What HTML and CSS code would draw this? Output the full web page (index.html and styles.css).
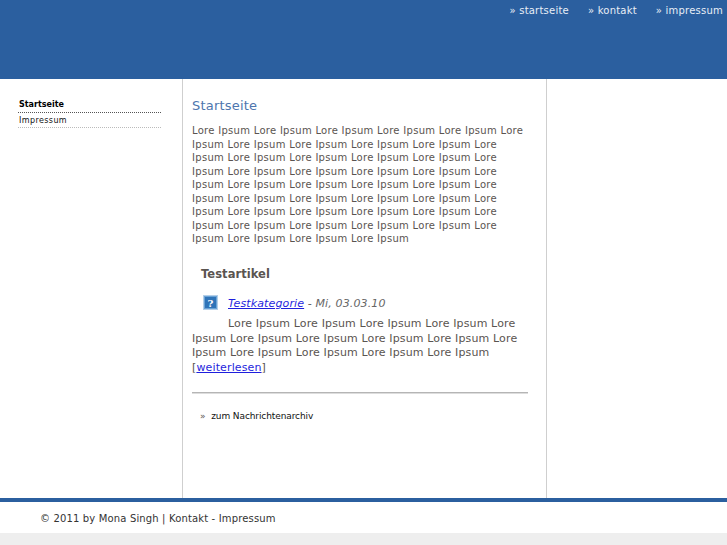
FILE: index.html
```html
<!DOCTYPE html>
<html lang="de">
<head>
<meta charset="utf-8">
<title>Startseite</title>
<link rel="stylesheet" href="styles.css">
</head>
<body>
<header class="top">
  <nav class="topnav">
    <a href="#">» startseite</a>
    <a href="#">» kontakt</a>
    <a href="#">» impressum</a>
  </nav>
</header>
<div class="wrap">
  <aside class="side">
    <a class="sidelink current" href="#">Startseite</a>
    <a class="sidelink" href="#">Impressum</a>
  </aside>
  <main class="main">
    <h1 class="title">Startseite</h1>
    <p class="intro">Lore Ipsum Lore Ipsum Lore Ipsum Lore Ipsum Lore Ipsum Lore Ipsum Lore Ipsum Lore Ipsum Lore Ipsum Lore Ipsum Lore Ipsum Lore Ipsum Lore Ipsum Lore Ipsum Lore Ipsum Lore Ipsum Lore Ipsum Lore Ipsum Lore Ipsum Lore Ipsum Lore Ipsum Lore Ipsum Lore Ipsum Lore Ipsum Lore Ipsum Lore Ipsum Lore Ipsum Lore Ipsum Lore Ipsum Lore Ipsum Lore Ipsum Lore Ipsum Lore Ipsum Lore Ipsum Lore Ipsum Lore Ipsum Lore Ipsum Lore Ipsum Lore Ipsum Lore Ipsum Lore Ipsum Lore Ipsum Lore Ipsum Lore Ipsum</p>
    <h2 class="article-title">Testartikel</h2>
    <div class="article">
      <svg class="thumb" width="15" height="15" viewBox="0 0 15 15" aria-hidden="true">
        <rect x="0.5" y="0.5" width="14" height="14" fill="#2f74b8" stroke="#b4cfe8"/>
        <rect x="1.5" y="1.5" width="12" height="12" fill="none" stroke="#6ba3d6"/>
        <text x="7.5" y="11.5" text-anchor="middle" class="thumb-q">?</text>
      </svg>
      <p class="meta"><a href="#">Testkategorie</a> - Mi, 03.03.10</p>
      <p class="body">Lore Ipsum Lore Ipsum Lore Ipsum Lore Ipsum Lore Ipsum Lore Ipsum Lore Ipsum Lore Ipsum Lore Ipsum Lore Ipsum Lore Ipsum Lore Ipsum Lore Ipsum Lore Ipsum [<a href="#">weiterlesen</a>]</p>
    </div>
    <hr class="rule">
    <p class="archive">» <a href="#">zum Nachrichtenarchiv</a></p>
  </main>
</div>
<footer class="foot">© 2011 by Mona Singh | Kontakt - Impressum</footer>
</body>
</html>
```
FILE: styles.css
```css
html, body { margin: 0; padding: 0; }
body {
  background: #eeeeee;
  font-family: "DejaVu Sans", sans-serif;
  color: #5a5450;
}
.top {
  background: #2b5f9f;
  height: 79px;
  box-sizing: border-box;
  padding: 4px 4px 0 0;
}
.topnav {
  display: flex;
  justify-content: flex-end;
  gap: 19px;
  font-size: 10px;
  letter-spacing: 0.22px;
  line-height: 13px;
}
.topnav a { color: #e8eef6; text-decoration: none; }
.wrap {
  display: flex;
  height: 419px;
  background: #fff;
}
.side {
  width: 182px;
  box-sizing: border-box;
  padding: 19px 21px 0 18px;
  font-size: 8px;
}
.sidelink {
  display: block;
  height: 14px;
  line-height: 15px;
  padding-left: 1px;
  color: #111;
  letter-spacing: 0.4px;
  text-decoration: none;
  border-bottom: 1px dotted #bbb;
}
.sidelink.current {
  font-weight: bold;
  line-height: 13px;
  color: #000;
  letter-spacing: 0;
  border-bottom-color: #555;
}
.main {
  width: 365px;
  box-sizing: border-box;
  border-left: 1px solid #cfcfcf;
  border-right: 1px solid #cfcfcf;
  padding: 0 18px 0 9px;
}
.title {
  margin: 18px 0 10px;
  font-size: 13px;
  letter-spacing: 0.2px;
  line-height: 17px;
  font-weight: normal;
  color: #4d76ae;
}
.intro {
  margin: 0;
  font-size: 10px;
  letter-spacing: 0.29px;
  line-height: 13.5px;
}
.article-title {
  margin: 21px 0 14px 9px;
  font-size: 11.5px;
  letter-spacing: 0.05px;
  line-height: 14px;
  font-weight: bold;
}
.article { font-size: 11px; letter-spacing: 0.13px; line-height: 14.5px; }
.thumb { float: left; margin: 0 10px 8px 11px; }
.thumb-q { font: bold 10px "DejaVu Serif", serif; fill: #fff; }
.meta {
  margin: 0 0 6px;
  padding-top: 2px;
  font-style: italic;
  color: #666;
}
.body { margin: 0; }
.article a { color: #1f1fdd; }
.rule {
  margin: 17px 0 0;
  height: 0;
  border: 0;
  border-top: 1px solid #b5b5b5;
  border-bottom: 1px solid #ddd;
}
.archive {
  margin: 16px 0 0 8px;
  font-size: 9px;
  letter-spacing: -0.1px;
  line-height: 12px;
}
.archive a { margin-left: 3px; color: #111; text-decoration: none; }
.foot {
  background: #fff;
  border-top: 4px solid #2b5f9f;
  height: 30px;
  padding: 1px 0 0 40px;
  font-size: 10px;
  letter-spacing: 0.15px;
  line-height: 31px;
  color: #333;
}
```
